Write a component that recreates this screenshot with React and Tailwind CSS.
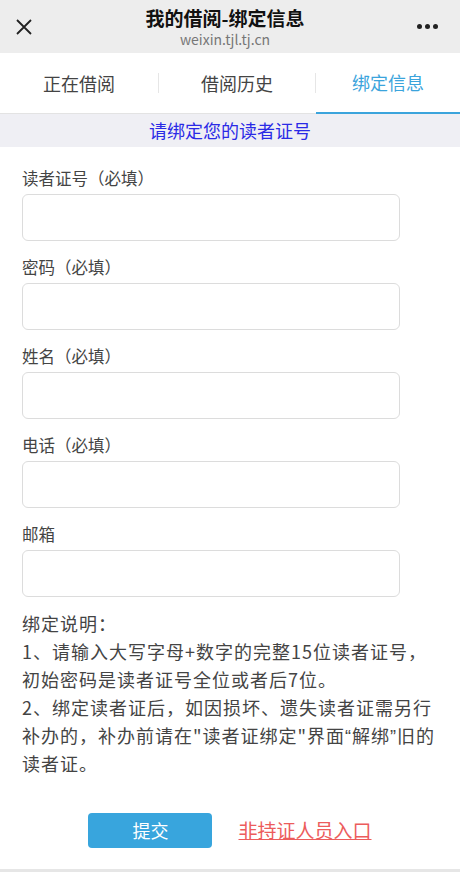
import React from 'react';

const font = { fontFamily: '"Noto Sans CJK SC", "Noto Sans", sans-serif' };

const fields = ['读者证号（必填）', '密码（必填）', '姓名（必填）', '电话（必填）', '邮箱'];

const App = () => {
  return (
    <div className="w-[460px] h-[872px] bg-white flex flex-col overflow-hidden" style={font}>
      {/* Top bar */}
      <div className="h-[53px] bg-[#ededed] flex items-center justify-between px-[14px]">
        <svg width="18" height="18" viewBox="0 0 18 18" className="ml-[1px]">
          <path d="M2 2 L16 16 M16 2 L2 16" stroke="#222" strokeWidth="1.8" />
        </svg>
        <div className="flex flex-col items-center">
          <span className="text-[19px] font-bold text-[#111] leading-[22px]">我的借阅-绑定信息</span>
          <span className="text-[14px] text-[#777] leading-[16px] mt-[2px]">weixin.tjl.tj.cn</span>
        </div>
        <div className="flex gap-[3px] mr-[8px]">
          <span className="w-[5px] h-[5px] rounded-full bg-[#222]" />
          <span className="w-[5px] h-[5px] rounded-full bg-[#222]" />
          <span className="w-[5px] h-[5px] rounded-full bg-[#222]" />
        </div>
      </div>

      {/* Tabs */}
      <div className="h-[61px] flex border-b border-[#e3e3e3]">
        <div className="w-[158px] flex items-center justify-center text-[18px] text-[#444]">正在借阅</div>
        <div className="w-px h-[20px] bg-[#e6e6e6] self-center" />
        <div className="w-[156px] flex items-center justify-center text-[18px] text-[#444]">借阅历史</div>
        <div className="w-px h-[20px] bg-[#e6e6e6] self-center" />
        <div className="flex-1 flex items-center justify-center text-[18px] text-[#3ba4dc] border-b-[2px] border-[#3ba4dc] mb-[-1px]">绑定信息</div>
      </div>

      {/* Notice */}
      <div className="h-[33px] bg-[#efeff4] flex items-center justify-center text-[18px] text-[#2a2ae6]">
        请绑定您的读者证号
      </div>

      {/* Form */}
      <div className="px-[22px] pt-[19px] flex flex-col">
        <div className="flex flex-col gap-[14px]">
          {fields.map((f) => (
            <div key={f} className="flex flex-col">
              <label className="text-[16.5px] text-[#444] leading-[24px] mb-[4px]">{f}</label>
              <div className="w-[378px] h-[47px] border border-[#dcdcdc] rounded-[6px] bg-white" />
            </div>
          ))}
        </div>

        <div className="text-[18px] tracking-[1px] text-[#444] leading-[28px] mt-[12px] whitespace-nowrap">
          <p>绑定说明：</p>
          <p>1、请输入大写字母+数字的完整15位读者证号，</p>
          <p>初始密码是读者证号全位或者后7位。</p>
          <p>2、绑定读者证后，如因损坏、遗失读者证需另行</p>
          <p className="h-[28px]">
            补办的，补办前请在"读者证绑定"界面<span className="font-['Liberation_Sans'] leading-none">“</span>解绑<span className="font-['Liberation_Sans'] leading-none">”</span>旧的
          </p>
          <p>读者证。</p>
        </div>

        <div className="flex items-center justify-center gap-[26px] mt-[36px] ml-[-22px] mr-[-22px]">
          <button className="w-[124px] h-[35px] bg-[#38a5dd] rounded-[4px] text-white text-[18px]">提交</button>
          <a className="text-[19px] text-[#ec5c5c] underline">非持证人员入口</a>
        </div>
      </div>
      <div className="flex-1" />
      <div className="h-[3px] bg-[#e6e6e6]" />
    </div>
  );
};

export default App;
